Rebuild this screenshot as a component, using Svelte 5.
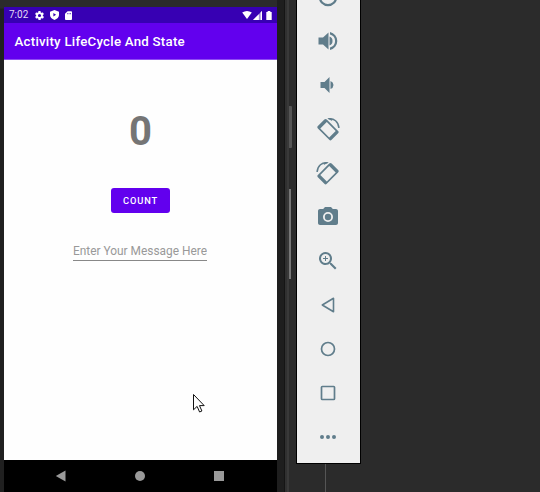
<script>
  const tools = [
    'power', 'volume-up', 'volume-down', 'rotate-left', 'rotate-right',
    'camera', 'zoom', 'back', 'home', 'overview', 'more'
  ];
  let count = $state(0);
</script>

<div class="desktop">
  <div class="device">
    <div class="screen">
      <div class="status">
        <span class="time">7:02</span>
        <svg class="gear" viewBox="2 2 20 20"><path fill-rule="evenodd" d="M19.4 13c.1-.7.1-1.300 0-2l2.100-1.600c.2-.2.300-.4.100-.6l-2-3.500c-.1-.2-.4-.3-.6-.2l-2.500 1a7 7 0 0 0-1.700-1l-.4-2.600A.5.500 0 0 0 14 2h-4a.5.500 0 0 0-.5.400l-.4 2.700a7 7 0 0 0-1.700 1l-2.500-1c-.2-.1-.5 0-.6.200l-2 3.500c-.1.200 0 .500.100.600L4.600 11a8 8 0 0 0 0 2l-2.100 1.600c-.2.200-.3.400-.1.600l2 3.500c.1.200.4.300.6.200l2.500-1 1.700 1 .4 2.600c0 .3.200.5.500.5h4c.300 0 .500-.2.500-.5l.4-2.600 1.700-1 2.500 1c.200.1.500 0 .600-.2l2-3.500c.100-.2.100-.4-.1-.6zM12 15.500a3.500 3.500 0 1 1 0-7 3.500 3.500 0 0 1 0 7z"/></svg>
        <svg class="shield" viewBox="2 1 20 22"><path fill-rule="evenodd" d="M12 1L2 5v7c0 5 4 9 10 11 6-2 10-6 10-11V5zM9.500 7.500l6 4-6 4z"/></svg>
        <svg class="card" viewBox="0 0 16 20"><path fill-rule="evenodd" d="M6 0h8q2 0 2 2v16q0 2-2 2H2q-2 0-2-2V6zM5.500 4v3H7V4zm3 0v3H10V4zm3 0v3H13V4z"/></svg>
        <span class="space"></span>
        <svg class="wifi" viewBox="0 0 24 20"><path d="M0 4Q12-4 24 4L12 20z"/></svg>
        <svg class="signal" viewBox="0 0 20 20"><path d="M0 20L20 0v20z" opacity=".55"/><path d="M0 20L13 7v13zM17 3l3-3v20h-3z"/></svg>
        <svg class="battery" viewBox="0 0 12 20"><path d="M3 0h6v2h3v18H0V2h3z"/></svg>
      </div>
      <header>Activity LifeCycle And State</header>
      <main>
        <div class="number">{count}</div>
        <button onclick={() => count++}>COUNT</button>
        <input placeholder="Enter Your Message Here" aria-label="Message" />
      </main>
      <nav>
        <svg viewBox="0 0 12 12"><path d="M.8 6L10.500.4v11.200z"/></svg>
        <svg viewBox="0 0 12 12"><circle cx="6" cy="6" r="5"/></svg>
        <svg viewBox="0 0 12 12"><path d="M1 1h10v10H1z"/></svg>
      </nav>
    </div>
    <div class="bezel"></div>
    <div class="edge">
      <i class="key power-key"></i>
      <i class="key volume-key"></i>
    </div>
  </div>

  <div class="side">
    <aside>
      {#each tools as tool}
        <div class="tool">
          <svg viewBox="0 0 24 24">
            {#if tool === 'power'}
              <circle class="line" cx="12" cy="12" r="8.200" stroke-width="2.200"/>
            {:else if tool === 'volume-up'}
              <path d="M2.500 8.500v7h4.500l5.500 5V3.500L7 8.500zm14 3.500A4.500 4.500 0 0 0 13.500 7.500v9A4.500 4.500 0 0 0 16.500 12zM14 3v2.500a6.700 6.700 0 0 1 0 13V21a9.200 9.200 0 0 0 0-18z"/>
            {:else if tool === 'volume-down'}
              <path d="M17.500 12A4.500 4.500 0 0 0 14.500 7.970v8.050A4.500 4.500 0 0 0 17.500 12zM4.500 9v6h4l5 5V4l-5 5z"/>
            {:else if tool === 'rotate-left' || tool === 'rotate-right'}
              <g transform={tool === 'rotate-right' ? 'translate(24 0) scale(-1 1)' : undefined}>
                <path transform="translate(12 12.700) rotate(45)" fill-rule="evenodd" d="M-8-6.300H8q1.700 0 1.700 1.700v9.200q0 1.700-1.700 1.700H-8q-1.700 0-1.700-1.700v-9.200q0-1.700 1.700-1.700zM-6.300-4.600v9.200H6.300v-9.200z"/>
                <path class="line" d="M12.500 1.800C18 .9 22.400 5 22.900 11" stroke-width="1.500"/>
                <path d="M11.200 1.200l3.800-.3 1.600 2-1 .9z"/>
              </g>
            {:else if tool === 'camera'}
              <circle cx="12" cy="12" r="3.200"/>
              <path d="M9 2L7.170 4H4c-1.100 0-2 .9-2 2v12c0 1.100.9 2 2 2h16c1.100 0 2-.9 2-2V6c0-1.100-.9-2-2-2h-3.170L15 2zm3 15a5 5 0 1 1 0-10 5 5 0 0 1 0 10z"/>
            {:else if tool === 'zoom'}
              <path d="M15.500 14h-.79l-.28-.27A6.500 6.500 0 1 0 13.730 14.430l.27.280v.79l5 4.990L20.490 19zm-6 0a4.500 4.500 0 1 1 0-9 4.500 4.500 0 0 1 0 9zM12 10h-2v2H9v-2H7V9h2V7h1v2h2z"/>
            {:else if tool === 'back'}
              <path class="line" d="M6.300 12l11.200-6.700v13.400z" stroke-width="1.600" stroke-linejoin="round"/>
            {:else if tool === 'home'}
              <circle class="line" cx="12" cy="12" r="6.500" stroke-width="1.700"/>
            {:else if tool === 'overview'}
              <rect class="line" x="5.500" y="5.500" width="13" height="13" rx=".8" stroke-width="1.700"/>
            {:else}
              <path d="M6 10a2 2 0 1 0 0 4 2 2 0 0 0 0-4zm6 0a2 2 0 1 0 0 4 2 2 0 0 0 0-4zm6 0a2 2 0 1 0 0 4 2 2 0 0 0 0-4z"/>
            {/if}
          </svg>
        </div>
      {/each}
    </aside>
    <div class="divider"></div>
  </div>

  <svg class="cursor" viewBox="0 0 14 21"><path d="M1.500 1.500v15.300l3.600-3.400 2.500 5.600 2.300-1-2.400-5.400h4.700z" fill="#fff" stroke="#111" stroke-width="1"/></svg>
</div>

<style>
  :global(body) { margin: 0; }
  .desktop {
    position: relative;
    display: flex;
    width: 540px;
    height: 492px;
    overflow: hidden;
    background: #2b2b2b;
    font-family: Roboto, sans-serif;
  }
  .device {
    box-sizing: border-box;
    display: flex;
    width: 296px;
    height: 492px;
    padding-left: 4px;
    background: linear-gradient(#2b2b2b 0 8px, #202020 9px);
  }
  .screen {
    display: flex;
    flex-direction: column;
    width: 273px;
    height: 485px;
    margin-top: 7px;
  }
  .bezel { width: 8px; background: linear-gradient(90deg, #1e1e1e 7px, #151515 7px); }
  .edge {
    flex: 1;
    display: flex;
    flex-direction: column;
    background: linear-gradient(90deg, #303030 2px, #393939 2px 4px, #2b2b2b 4px);
  }
  .key { display: block; margin-left: 4px; }
  .power-key { width: 3px; height: 42px; margin-top: 106px; background: #555; border-radius: 0 1px 1px 0; }
  .volume-key { width: 2px; height: 90px; margin-top: 41px; background: #777; }
  .status {
    box-sizing: border-box;
    display: flex;
    align-items: center;
    height: 16px;
    padding: 0 5px;
    color: #e3dcf5;
    background: #3700b3;
  }
  .status svg { fill: #fff; }
  .time { width: 25.500px; font-size: 10px; line-height: 16px; }
  .gear { width: 9px; height: 9px; }
  .shield { width: 9px; height: 10px; margin-left: 6px; }
  .card { width: 7px; height: 9px; margin-left: 6.500px; }
  .space { flex: 1; }
  .wifi { width: 10px; height: 8px; }
  .signal { width: 9px; height: 9px; margin-left: 1px; }
  .battery { width: 6px; height: 9px; margin: 0 0 0 4px; }
  header {
    box-sizing: border-box;
    height: 37px;
    padding-left: 10.500px;
    color: #fff;
    background: #6200ee;
    border-bottom: 1px solid #8e4df2;
    font-size: 13.300px;
    font-weight: 500;
    letter-spacing: .23px;
    line-height: 38px;
    white-space: nowrap;
  }
  main {
    flex: 1;
    display: flex;
    flex-direction: column;
    align-items: center;
    background: #fefefe;
  }
  .number {
    height: 48px;
    margin-top: 48px;
    color: #757575;
    font-size: 40px;
    font-weight: 700;
    line-height: 48px;
  }
  button {
    width: 59px;
    height: 25px;
    margin: 32px 0 0;
    padding: 0;
    color: #fff;
    background: #6200ee;
    border: 0;
    border-radius: 3px;
    font: 500 9.300px/25px Roboto, sans-serif;
    letter-spacing: .85px;
  }
  input {
    box-sizing: border-box;
    width: 134px;
    height: 18px;
    margin: 30px 1px 0 0;
    padding: 0 0 2px;
    border: 0;
    border-bottom: 1px solid #888;
    outline: 0;
    background: none;
    font: 11.900px/15px Roboto, sans-serif;
  }
  input::placeholder { color: #999; opacity: 1; }
  nav {
    box-sizing: border-box;
    display: flex;
    align-items: center;
    justify-content: space-between;
    height: 32px;
    padding: 0 52px 0 51px;
    background: #000;
  }
  nav svg { width: 12px; height: 12px; fill: #999; }
  .side { width: 65px; height: 492px; }
  aside {
    box-sizing: border-box;
    display: flex;
    flex-direction: column;
    justify-content: flex-end;
    height: 464px;
    padding: 0 1px 4px 0;
    overflow: hidden;
    background: #efefef;
    border: 1px solid #000;
    border-top: 0;
  }
  .tool {
    flex: 0 0 44px;
    display: flex;
    align-items: center;
    justify-content: center;
  }
  .tool svg { width: 24px; height: 24px; fill: #607d8b; }
  .tool .line { fill: none; stroke: #607d8b; }
  .divider { width: 1px; height: 28px; margin-left: 29px; background: #555; }
  .cursor { position: absolute; left: 192px; top: 393px; width: 14px; height: 21px; }
</style>
